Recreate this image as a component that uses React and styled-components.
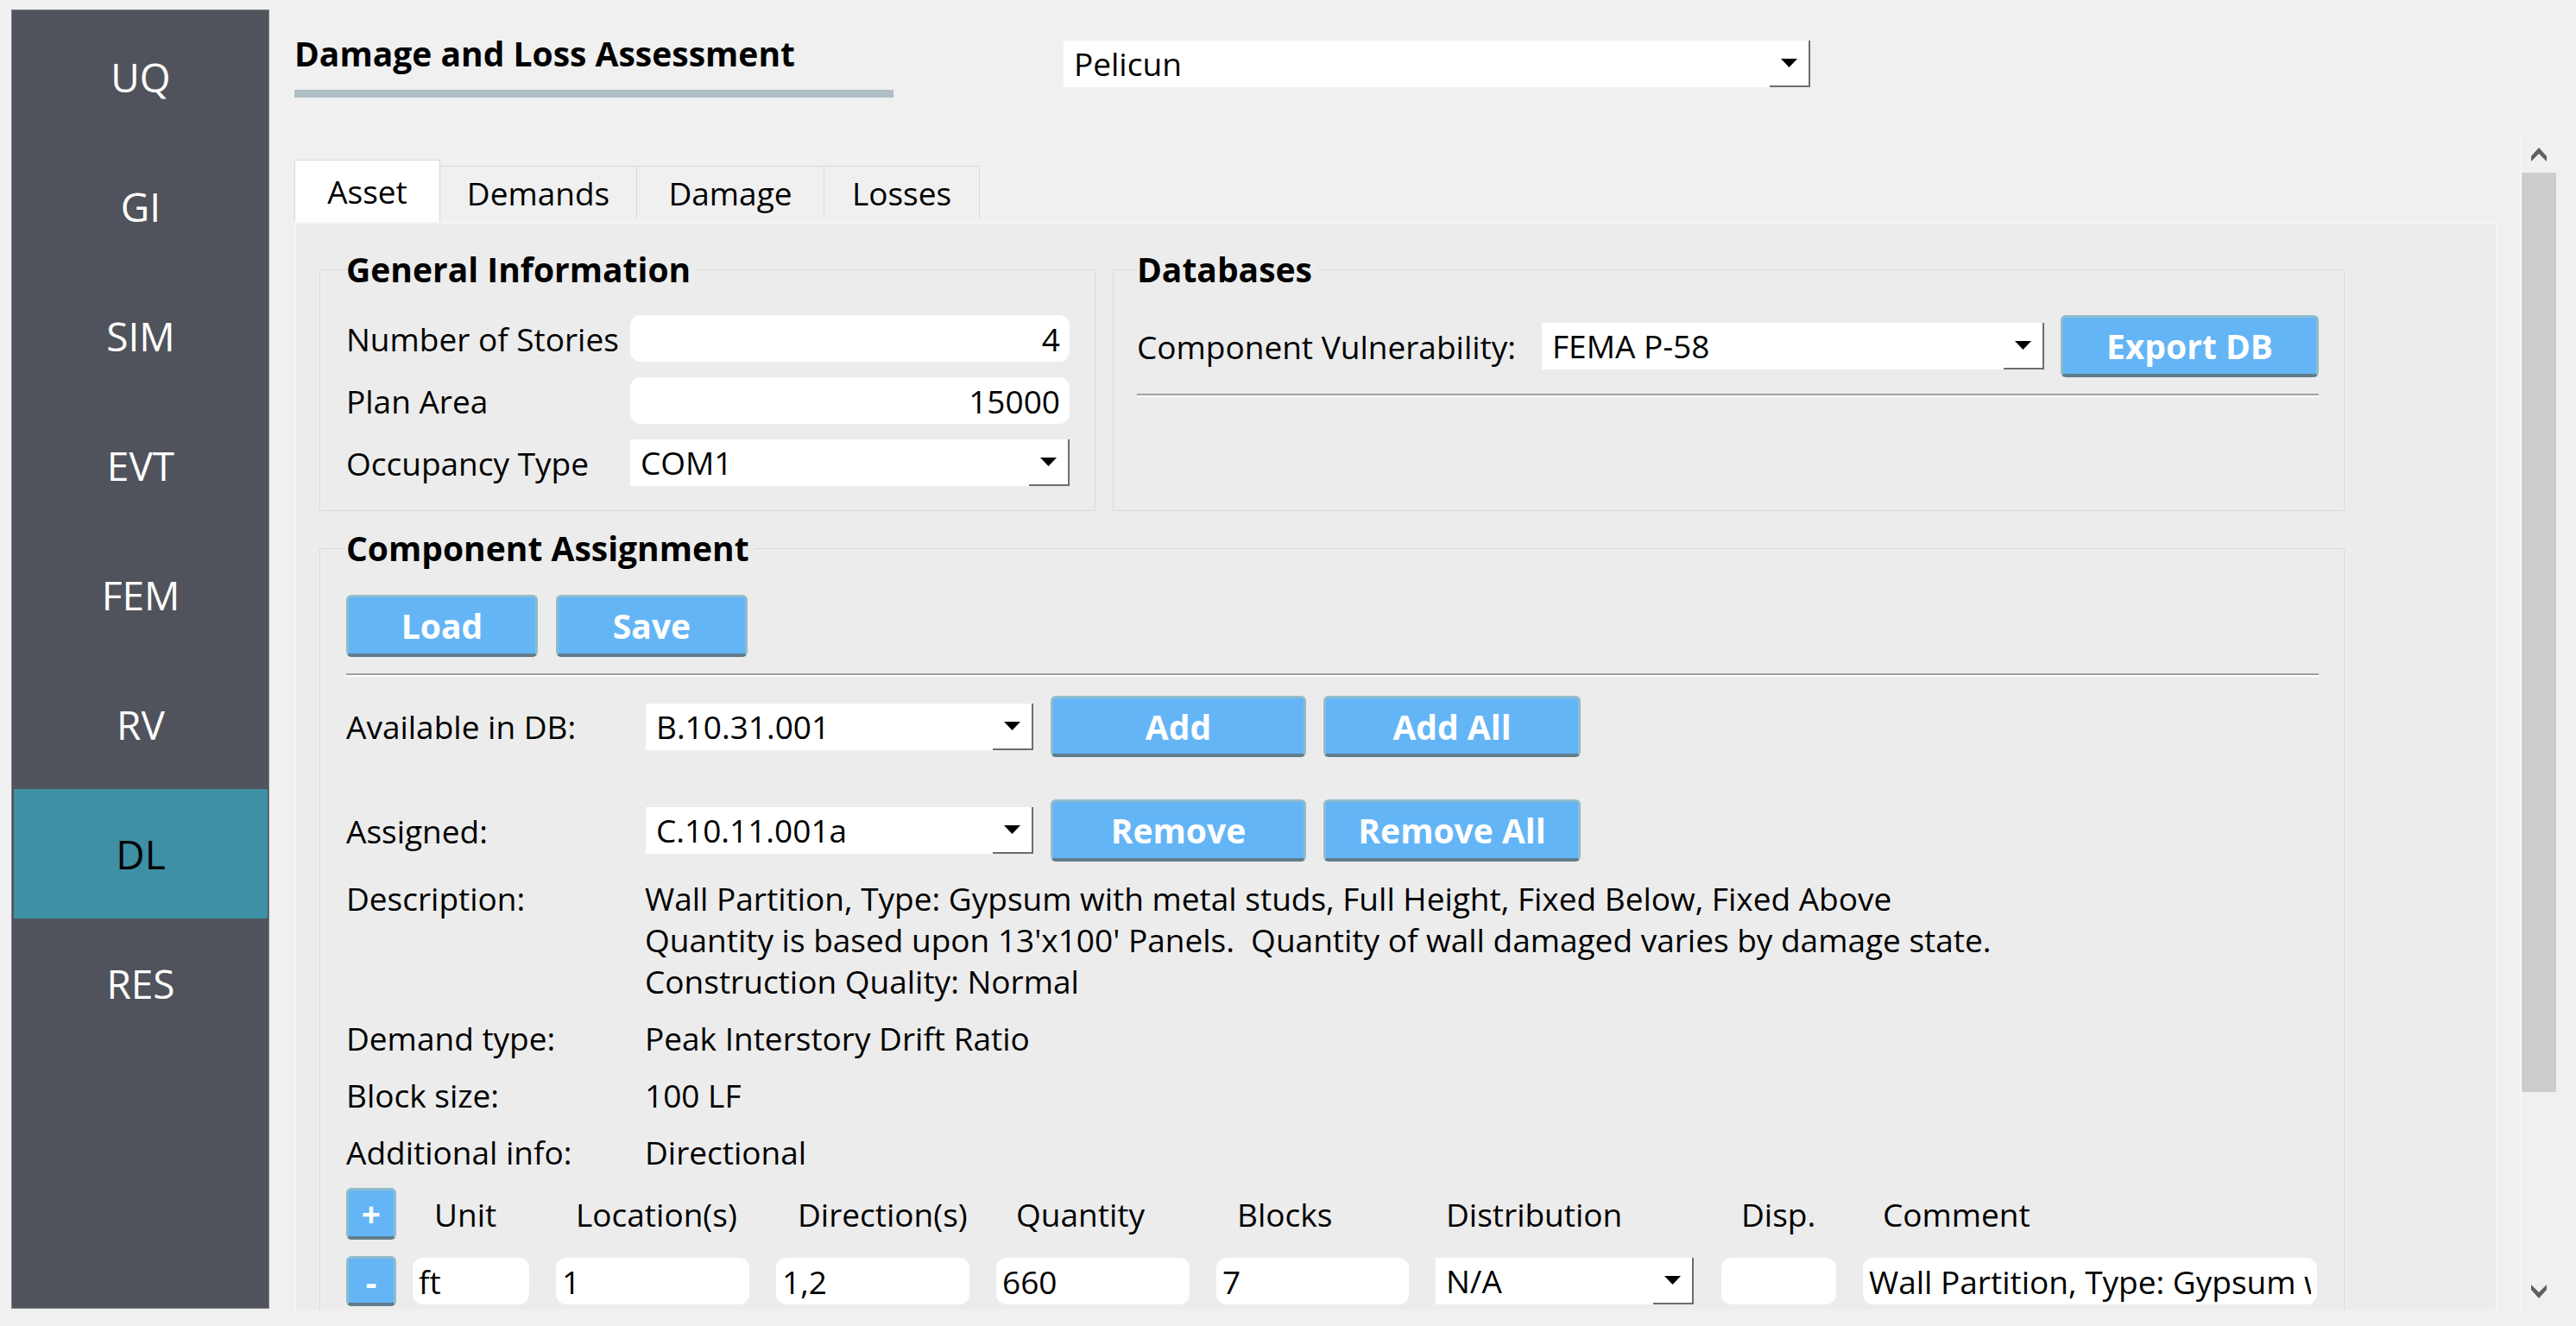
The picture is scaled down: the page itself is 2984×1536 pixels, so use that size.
import React from 'react';
import styled, { createGlobalStyle } from 'styled-components';

const GlobalStyle = createGlobalStyle`
  html, body {
    margin: 0;
    padding: 0;
    background: #f0f0f0;
  }
  body {
    font-family: "Open Sans", "Noto Sans", sans-serif;
    color: #000;
  }
  #root {
    width: 2984px;
    height: 1536px;
    overflow: hidden;
  }
  * {
    box-sizing: border-box;
  }
`;

const Window = styled.div`
  display: flex;
  width: 2984px;
  height: 1536px;
  background: #f0f0f0;
  font-size: 37px;
`;

const Sidebar = styled.nav`
  margin: 11px 0 0 13px;
  width: 299px;
  height: 1505px;
  flex-shrink: 0;
  background: #50535b;
  border: 1px solid #7c7e84;
  padding: 2px 1px 0 2px;
  display: flex;
  flex-direction: column;
`;

const NavItem = styled.div`
  width: 294px;
  height: 150px;
  display: flex;
  align-items: center;
  justify-content: center;
  font-size: 46px;
  color: ${p => (p.$active ? '#000' : '#fff')};
  background: ${p => (p.$active ? '#3e90a5' : 'transparent')};
`;

const Main = styled.main`
  margin-left: 29px;
  width: 2620px;
  display: flex;
  flex-direction: column;
`;

const Header = styled.header`
  display: flex;
  align-items: flex-start;
  gap: 197px;
  height: 113px;
`;

const TitleBlock = styled.div`
  width: 694px;
  padding-top: 35px;
`;

const Title = styled.h1`
  margin: 0;
  font-size: 39px;
  line-height: 53px;
  font-weight: 700;
`;

const TitleBar = styled.div`
  margin-top: 16px;
  height: 9px;
  background: #b0bec5;
`;

const HeaderCombo = styled.div`
  margin-top: 47px;
`;

const ScrollArea = styled.div`
  margin-top: 45px;
  height: 1359px;
  display: flex;
`;

const Viewport = styled.div`
  width: 2579px;
  overflow: hidden;
  padding-top: 27px;
`;

const Scrollbar = styled.div`
  width: 41px;
  border-left: 1px solid #fff;
  display: flex;
  flex-direction: column;
`;

const ScrollArrow = styled.div`
  height: 42px;
  display: flex;
  align-items: center;
  justify-content: center;
`;

const ScrollThumb = styled.div`
  height: 1065px;
  background: #cdcdcd;
`;

const ScrollTrack = styled.div`
  flex: 1;
`;

const TabBar = styled.div`
  display: flex;
  align-items: flex-end;
  height: 72px;
`;

const Tab = styled.div`
  width: ${p => p.$w}px;
  height: ${p => (p.$active ? 72 : 61)}px;
  margin-bottom: ${p => (p.$active ? 0 : 4)}px;
  line-height: ${p => (p.$active ? 72 : 61)}px;
  text-align: center;
  background: ${p => (p.$active ? '#fff' : '#f0f0f0')};
  border-top: 1px solid #d9d9d9;
  border-right: 1px solid #d9d9d9;
  border-left: ${p => (p.$active ? '1px solid #d9d9d9' : 'none')};
`;

const Panel = styled.div`
  width: 2552px;
  height: 1400px;
  background: #ececec;
  border: 2px solid #f6f6f6;
  padding: 29px 0 0 27px;
`;

const TopRow = styled.div`
  display: flex;
  gap: 20px;
`;

const Group = styled.fieldset`
  margin: ${p => p.$mt || 0}px 0 0 0;
  min-width: 0;
  width: ${p => p.$w}px;
  border: 1px solid #dadada;
  padding: ${p => p.$pad};
`;

const Legend = styled.legend`
  padding: 0 6px 0 0;
  font-size: 39px;
  font-weight: 700;
  line-height: 48px;
`;

const FormGrid = styled.div`
  display: grid;
  grid-template-columns: 329px 1fr;
  row-gap: 18px;
  align-items: center;
`;

const Field = styled.input`
  width: ${p => (p.$w ? `${p.$w}px` : '100%')};
  height: 54px;
  border: none;
  border-radius: 12px;
  background: #fff;
  font: 37px "Open Sans", "Noto Sans", sans-serif;
  color: #000;
  text-align: ${p => p.$align || 'left'};
  padding: 0 ${p => (p.$align === 'right' ? 11 : 7)}px 0 7px;
  outline: none;
`;

const ComboBox = styled.div`
  width: ${p => (p.$w ? `${p.$w}px` : '100%')};
  height: 54px;
  background: #fff;
  display: flex;
  flex-shrink: 0;
`;

const ComboText = styled.div`
  flex: 1;
  padding-left: 12px;
  line-height: 54px;
  white-space: nowrap;
  overflow: hidden;
`;

const ComboArrow = styled.div`
  width: 47px;
  height: 54px;
  border-right: 2px solid #6d6d6d;
  border-bottom: 2px solid #6d6d6d;
  display: flex;
  align-items: center;
  justify-content: center;
`;

const Button = styled.button`
  width: ${p => p.$w}px;
  height: ${p => p.$h || 72}px;
  flex-shrink: 0;
  margin-left: ${p => p.$ml || 0}px;
  padding: 0;
  background: #64b5f6;
  color: #fff;
  font: 700 39px "Open Sans", "Noto Sans", sans-serif;
  border: 3px solid #8fbccd;
  border-bottom: 4px solid #5f7d8a;
  border-radius: 6px;
`;

const Row = styled.div`
  display: flex;
  align-items: center;
  gap: ${p => p.$gap || 0}px;
  margin-top: ${p => p.$mt || 0}px;
  height: ${p => p.$h || 'auto'};
`;

const Label = styled.div`
  width: ${p => p.$w}px;
  flex-shrink: 0;
  white-space: nowrap;
`;

const Separator = styled.div`
  margin-top: ${p => p.$mt}px;
  height: 4px;
  border-top: 2px solid #a0a0a0;
  border-bottom: 2px solid #fff;
`;

const InfoGrid = styled.div`
  margin-top: 19px;
  display: grid;
  grid-template-columns: 346px 1fr;
  row-gap: 18px;
  line-height: 48px;
`;

const InfoValue = styled.div`
  white-space: pre-wrap;
`;

const TableRow = styled.div`
  display: flex;
  align-items: center;
  margin-top: ${p => p.$mt}px;
  height: ${p => p.$h}px;
`;

const HeadCell = styled.div`
  width: ${p => p.$w}px;
  margin-left: ${p => p.$ml}px;
  padding-left: ${p => p.$pad}px;
  white-space: nowrap;
`;

const FieldCell = styled.div`
  width: ${p => p.$w}px;
  margin-left: ${p => p.$ml}px;
  flex-shrink: 0;
`;

const Arrow = () => (
  <svg width="19" height="10" viewBox="0 0 19 10">
    <polygon points="0,0 19,0 9.5,10" fill="#000" />
  </svg>
);

const Chevron = ({ down }) => (
  <svg width="18" height="16" viewBox="0 0 18 16">
    <polygon
      points={down ? '9,16 18,6 18,0 9,9 0,0 0,6' : '9,0 18,10 18,16 9,7 0,16 0,10'}
      fill="#606060"
    />
  </svg>
);

const Combo = ({ value, w }) => (
  <ComboBox $w={w}>
    <ComboText>{value}</ComboText>
    <ComboArrow>
      <Arrow />
    </ComboArrow>
  </ComboBox>
);

const navItems = ['UQ', 'GI', 'SIM', 'EVT', 'FEM', 'RV', 'DL', 'RES'];

const tabs = [
  { label: 'Asset', w: 169, active: true },
  { label: 'Demands', w: 228 },
  { label: 'Damage', w: 217 },
  { label: 'Losses', w: 180 },
];

const description =
  'Wall Partition, Type: Gypsum with metal studs, Full Height, Fixed Below, Fixed Above\n' +
  "Quantity is based upon 13'x100' Panels.  Quantity of wall damaged varies by damage state.\n" +
  'Construction Quality: Normal';

const columns = [
  { label: 'Unit', w: 135, ml: 19, pad: 25, value: 'ft' },
  { label: 'Location(s)', w: 224, ml: 31, pad: 23, value: '1' },
  { label: 'Direction(s)', w: 224, ml: 31, pad: 25, value: '1,2' },
  { label: 'Quantity', w: 224, ml: 31, pad: 23, value: '660' },
  { label: 'Blocks', w: 223, ml: 31, pad: 24, value: '7' },
  { label: 'Distribution', w: 299, ml: 31, pad: 12, value: 'N/A', combo: true },
  { label: 'Disp.', w: 133, ml: 32, pad: 23, value: '' },
  {
    label: 'Comment',
    w: 526,
    ml: 31,
    pad: 23,
    value: 'Wall Partition, Type: Gypsum with metal studs, Full Height, Fixed Below, Fixed Above',
  },
];

const App = () => {
  return (
    <>
      <GlobalStyle />
      <Window>
        <Sidebar>
          {navItems.map(item => (
            <NavItem key={item} $active={item === 'DL'}>
              {item}
            </NavItem>
          ))}
        </Sidebar>
        <Main>
          <Header>
            <TitleBlock>
              <Title>Damage and Loss Assessment</Title>
              <TitleBar />
            </TitleBlock>
            <HeaderCombo>
              <Combo value="Pelicun" w={865} />
            </HeaderCombo>
          </Header>
          <ScrollArea>
            <Viewport>
              <TabBar>
                {tabs.map(tab => (
                  <Tab key={tab.label} $w={tab.w} $active={tab.active}>
                    {tab.label}
                  </Tab>
                ))}
              </TabBar>
              <Panel>
                <TopRow>
                  <Group $w={899} $pad="29px 29px 28px 30px">
                    <Legend>General Information</Legend>
                    <FormGrid>
                      <div>Number of Stories</div>
                      <Field readOnly value="4" $align="right" />
                      <div>Plan Area</div>
                      <Field readOnly value="15000" $align="right" />
                      <div>Occupancy Type</div>
                      <Combo value="COM1" />
                    </FormGrid>
                  </Group>
                  <Group $w={1427} $pad="29px 29px 0 27px">
                    <Legend>Databases</Legend>
                    <Row $h="72px">
                      <Label $w={469}>Component Vulnerability:</Label>
                      <Combo value="FEMA P-58" w={582} />
                      <Button $w={299} $ml={19}>
                        Export DB
                      </Button>
                    </Row>
                    <Separator $mt={19} />
                  </Group>
                </TopRow>
                <Group $w={2346} $mt={19} $pad="30px 29px 60px 30px">
                  <Legend>Component Assignment</Legend>
                  <Row $gap={21}>
                    <Button $w={222}>Load</Button>
                    <Button $w={222}>Save</Button>
                  </Row>
                  <Separator $mt={19} />
                  <Row $mt={22} $gap={20}>
                    <Label $w={327}>Available in DB:</Label>
                    <Combo value="B.10.31.001" w={449} />
                    <Button $w={296} $h={71}>
                      Add
                    </Button>
                    <Button $w={298} $h={71}>
                      Add All
                    </Button>
                  </Row>
                  <Row $mt={49} $gap={20}>
                    <Label $w={327}>Assigned:</Label>
                    <Combo value="C.10.11.001a" w={449} />
                    <Button $w={296}>Remove</Button>
                    <Button $w={298}>Remove All</Button>
                  </Row>
                  <InfoGrid>
                    <div>Description:</div>
                    <InfoValue>{description}</InfoValue>
                    <div>Demand type:</div>
                    <InfoValue>Peak Interstory Drift Ratio</InfoValue>
                    <div>Block size:</div>
                    <InfoValue>100 LF</InfoValue>
                    <div>Additional info:</div>
                    <InfoValue>Directional</InfoValue>
                  </InfoGrid>
                  <TableRow $mt={17} $h={60}>
                    <Button $w={58} $h={60}>
                      +
                    </Button>
                    {columns.map(col => (
                      <HeadCell key={col.label} $w={col.w} $ml={col.ml} $pad={col.pad}>
                        {col.label}
                      </HeadCell>
                    ))}
                  </TableRow>
                  <TableRow $mt={19} $h={58}>
                    <Button $w={58} $h={58}>
                      -
                    </Button>
                    {columns.map(col => (
                      <FieldCell key={col.label} $w={col.w} $ml={col.ml}>
                        {col.combo ? <Combo value={col.value} /> : <Field readOnly value={col.value} />}
                      </FieldCell>
                    ))}
                  </TableRow>
                </Group>
              </Panel>
            </Viewport>
            <Scrollbar>
              <ScrollArrow>
                <Chevron />
              </ScrollArrow>
              <ScrollThumb />
              <ScrollTrack />
              <ScrollArrow>
                <Chevron down />
              </ScrollArrow>
            </Scrollbar>
          </ScrollArea>
        </Main>
      </Window>
    </>
  );
};

export default App;
